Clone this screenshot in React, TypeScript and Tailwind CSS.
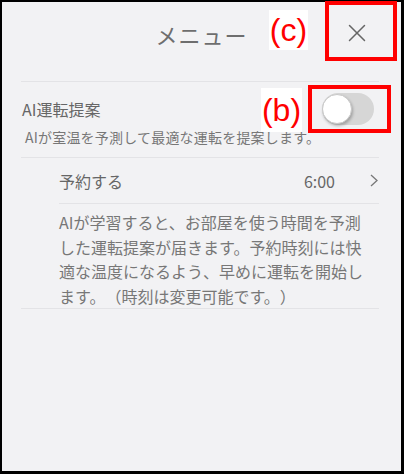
import { X } from "lucide-react";

const jp = { fontFamily: '"Noto Sans CJK JP", "Noto Sans", sans-serif' };

function Toggle() {
  return (
    <div className="relative w-[52px] h-[32px] rounded-full bg-[#d6d6d6]">
      {/* knob */}
      <div className="absolute left-0 top-[1px] w-[30px] h-[30px] rounded-full bg-white border border-[#c8c8c8] shadow-[1px_2px_3px_rgba(0,0,0,0.25)]" />
    </div>
  );
}

export default function App() {
  return (
    <div className="relative w-[404px] h-[474px] bg-white [text-spacing-trim:space-all]" style={jp}>
      <div className="w-full h-full flex flex-col bg-[#f2f2f4] border-t-2 border-l-2 border-r-[3px] border-b-[3px] border-black">
        {/* Header */}
        <div className="relative h-[79px] flex justify-center pt-[17px]">
          <span className="text-[22px] leading-[30px] text-[#6e6e6e] tracking-[1px]">メニュー</span>
          <button type="button" className="absolute right-[29px] top-[16px] text-[#666]">
            <X className="w-[30px] h-[30px]" strokeWidth={1.2} />
          </button>
        </div>

        <div className="ml-[19px] mr-[22px] flex flex-col">
          <div className="border-t border-[#e3e3e6]" />

          {/* AI運転提案 */}
          <div className="flex items-center justify-between pt-[11px] pr-[5px]">
            <span className="pl-[1px] text-[16px] leading-[24px] text-[#666]">AI運転提案</span>
            <Toggle />
          </div>
          <p className="mt-[2px] pl-[4px] pb-[10px] text-[14px] leading-[20px] tracking-[0.2px] text-[#777]">
            AIが室温を予測して最適な運転を提案します。
          </p>

          <div className="border-t border-[#e3e3e6]" />

          {/* 予約 */}
          <div className="pl-[38px] flex flex-col">
            <div className="h-[45px] flex items-center justify-between pr-[1px]">
              <span className="text-[16px] text-[#666]">予約する</span>
              <div className="flex items-center gap-[35px]">
                <span className="text-[16px] text-[#666]">6:00</span>
                <svg width="8" height="13" viewBox="0 0 8 13" fill="none">
                  <polyline points="1,1 7,6.5 1,12" stroke="#777" strokeWidth="1.3" />
                </svg>
              </div>
            </div>
            <div className="border-t border-[#e3e3e6]" />
            <p className="pt-[6px] text-[16px] leading-[24.5px] text-[#777]">
              AIが学習すると、お部屋を使う時間を予測
              <br />
              した運転提案が届きます。予約時刻には快
              <br />
              適な温度になるよう、早めに運転を開始し
              <br />
              ます。（時刻は変更可能です。）
            </p>
          </div>

          <div className="border-t border-[#e3e3e6]" />
        </div>
      </div>

      {/* annotations */}
      <div className="absolute left-[325px] top-[1px] w-[72px] h-[60px] border-4 border-[#ff0000]" />
      <div
        className="absolute left-[269px] top-[10px] w-[39px] h-[40px] bg-white flex items-center justify-center text-[32px] leading-none text-[#ff0000]"
        style={{ fontFamily: '"Liberation Sans", Arial, sans-serif' }}
      >
        (c)
      </div>
      <div className="absolute left-[308px] top-[85px] w-[83px] h-[48px] border-4 border-[#ff0000]" />
      <div
        className="absolute left-[261px] top-[88px] w-[41px] h-[44px] bg-white flex items-center justify-center text-[32px] leading-none text-[#ff0000]"
        style={{ fontFamily: '"Liberation Sans", Arial, sans-serif' }}
      >
        (b)
      </div>
    </div>
  );
}
